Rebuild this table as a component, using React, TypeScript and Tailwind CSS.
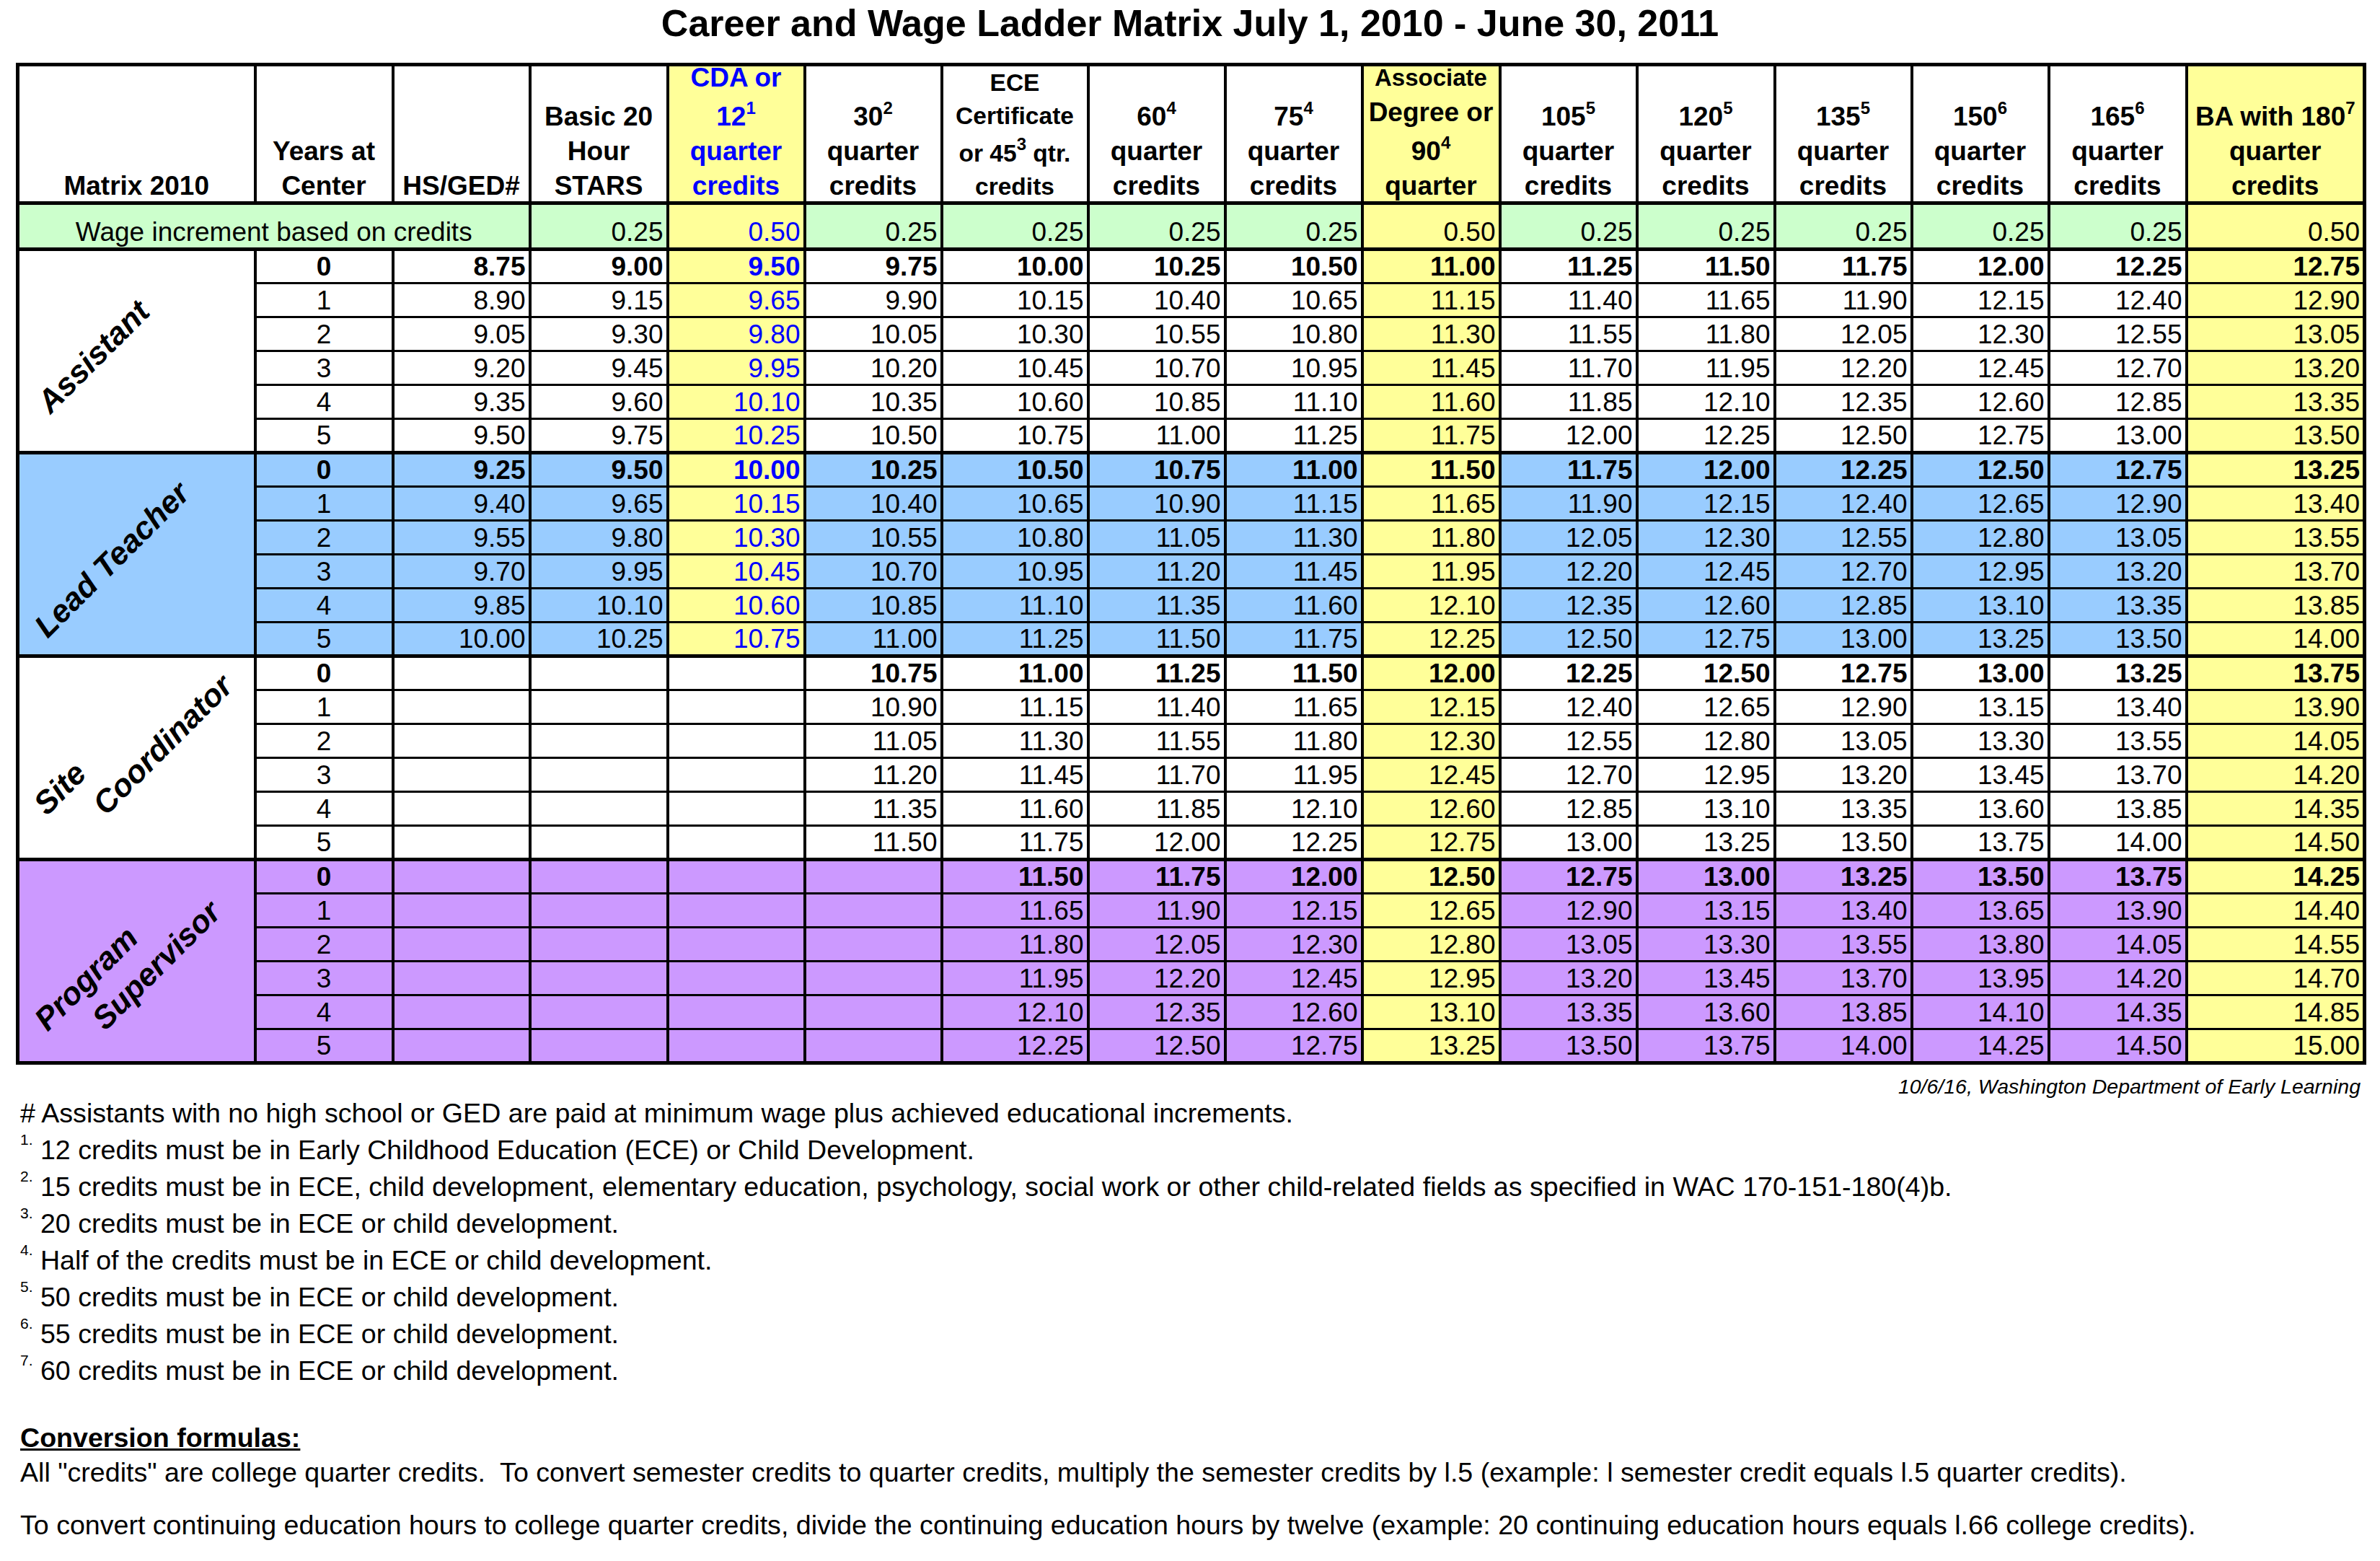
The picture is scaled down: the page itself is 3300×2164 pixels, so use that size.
import React from 'react';

const BASE = [875, 900, 950, 975, 1000, 1025, 1050, 1100, 1125, 1150, 1175, 1200, 1225, 1275];
const INCR = ['0.25', '0.50', '0.25', '0.25', '0.25', '0.25', '0.50', '0.25', '0.25', '0.25', '0.25', '0.25', '0.50'];
const COL_W = [
  'w-[329px]', 'w-[191px]', 'w-[190px]', 'w-[191px]', 'w-[190px]', 'w-[190px]', 'w-[203px]', 'w-[190px]',
  'w-[190px]', 'w-[191px]', 'w-[190px]', 'w-[191px]', 'w-[190px]', 'w-[190px]', 'w-[191px]', 'w-[247px]',
];

const fmt = (c: number) => `${Math.floor(c / 100)}.${String(c % 100).padStart(2, '0')}`;

const LBL = 'absolute origin-[0_37px] -rotate-45 whitespace-nowrap text-[44px] leading-none font-bold italic';

type Group = { key: string; offset: number; blank: number; bg: string; label: React.ReactNode };

const GROUPS: Group[] = [
  {
    key: 'assistant',
    offset: 0,
    blank: 0,
    bg: 'bg-white',
    label: <span className={`${LBL} left-[43px] top-[189.5px]`}>Assistant</span>,
  },
  {
    key: 'lead',
    offset: 50,
    blank: 0,
    bg: 'bg-[#99ccff]',
    label: <span className={`${LBL} left-[39px] top-[218.5px]`}>Lead Teacher</span>,
  },
  {
    key: 'site',
    offset: 100,
    blank: 3,
    bg: 'bg-white',
    label: (
      <>
        <span className={`${LBL} left-[38px] top-[183px]`}>Site</span>
        <span className={`${LBL} left-[120px] top-[183px]`}>Coordinator</span>
      </>
    ),
  },
  {
    key: 'program',
    offset: 150,
    blank: 4,
    bg: 'bg-[#cc99ff]',
    label: (
      <>
        <span className={`${LBL} left-[39px] top-[199.5px]`}>Program</span>
        <span className={`${LBL} left-[119px] top-[198.5px]`}>Supervisor</span>
      </>
    ),
  },
];

const Sup = ({ c }: { c: string }) => <sup className="text-[24px] -top-[16px]">{c}</sup>;
const FSup = ({ c }: { c: string }) => <sup className="text-[21px] -top-[20px]">{c}</sup>;

const HEAD =
  'border-t-[3px] border-b-[5px] border-l-[4px] border-r-[4px] border-black align-bottom text-center font-bold whitespace-nowrap';
const L = 'leading-[48px]';
const LS = 'leading-[48px] pt-[6px]';

function Head({ children }: { children: React.ReactNode }) {
  return <div className="relative top-[3px] -mt-[40px]">{children}</div>;
}

const GCELL =
  'border-t-[5px] border-b-[5px] border-l-[4px] border-r-[4px] border-black align-bottom pb-[3px] leading-none whitespace-nowrap';

function HeaderRow() {
  return (
    <tr className="h-[192px]">
      <td className={`${HEAD} bg-white`}>
        <Head>
          <div className={L}>Matrix 2010</div>
        </Head>
      </td>
      <td className={`${HEAD} bg-white`}>
        <Head>
          <div className={L}>Years at</div>
          <div className={L}>Center</div>
        </Head>
      </td>
      <td className={`${HEAD} bg-white`}>
        <Head>
          <div className={L}>HS/GED#</div>
        </Head>
      </td>
      <td className={`${HEAD} bg-white`}>
        <Head>
          <div className={L}>Basic 20</div>
          <div className={L}>Hour</div>
          <div className={L}>STARS</div>
        </Head>
      </td>
      <td className={`${HEAD} bg-[#ffff99] text-[#0000ff]`}>
        <Head>
          <div className={L}>CDA or</div>
          <div className={LS}>
            12<Sup c="1" />
          </div>
          <div className={L}>quarter</div>
          <div className={L}>credits</div>
        </Head>
      </td>
      <td className={`${HEAD} bg-white`}>
        <Head>
          <div className={L}>
            30<Sup c="2" />
          </div>
          <div className={L}>quarter</div>
          <div className={L}>credits</div>
        </Head>
      </td>
      <td className={`${HEAD} bg-white text-[33.5px]`}>
        <Head>
          <div className="leading-[46px]">ECE</div>
          <div className="leading-[46px]">Certificate</div>
          <div className="leading-[46px] pt-[6px]">
            or 45<Sup c="3" /> qtr.
          </div>
          <div className="leading-[46px]">credits</div>
        </Head>
      </td>
      <td className={`${HEAD} bg-white`}>
        <Head>
          <div className={L}>
            60<Sup c="4" />
          </div>
          <div className={L}>quarter</div>
          <div className={L}>credits</div>
        </Head>
      </td>
      <td className={`${HEAD} bg-white`}>
        <Head>
          <div className={L}>
            75<Sup c="4" />
          </div>
          <div className={L}>quarter</div>
          <div className={L}>credits</div>
        </Head>
      </td>
      <td className={`${HEAD} bg-[#ffff99]`}>
        <Head>
          <div className={`${L} text-[33px]`}>Associate</div>
          <div className={L}>Degree or</div>
          <div className={LS}>
            90<Sup c="4" />
          </div>
          <div className={L}>quarter</div>
        </Head>
      </td>
      <td className={`${HEAD} bg-white`}>
        <Head>
          <div className={L}>
            105<Sup c="5" />
          </div>
          <div className={L}>quarter</div>
          <div className={L}>credits</div>
        </Head>
      </td>
      <td className={`${HEAD} bg-white`}>
        <Head>
          <div className={L}>
            120<Sup c="5" />
          </div>
          <div className={L}>quarter</div>
          <div className={L}>credits</div>
        </Head>
      </td>
      <td className={`${HEAD} bg-white`}>
        <Head>
          <div className={L}>
            135<Sup c="5" />
          </div>
          <div className={L}>quarter</div>
          <div className={L}>credits</div>
        </Head>
      </td>
      <td className={`${HEAD} bg-white`}>
        <Head>
          <div className={L}>
            150<Sup c="6" />
          </div>
          <div className={L}>quarter</div>
          <div className={L}>credits</div>
        </Head>
      </td>
      <td className={`${HEAD} bg-white`}>
        <Head>
          <div className={L}>
            165<Sup c="6" />
          </div>
          <div className={L}>quarter</div>
          <div className={L}>credits</div>
        </Head>
      </td>
      <td className={`${HEAD} bg-[#ffff99]`}>
        <Head>
          <div className={L}>
            BA with 180<Sup c="7" />
          </div>
          <div className={L}>quarter</div>
          <div className={L}>credits</div>
        </Head>
      </td>
    </tr>
  );
}

function IncrementRow() {
  return (
    <tr className="h-[64px]">
      <td colSpan={3} className={`${GCELL} text-center bg-[#ccffcc]`}>
        Wage increment based on credits
      </td>
      {INCR.map((v, i) => {
        const yellow = i === 1 || i === 6 || i === 12;
        return (
          <td
            key={i}
            className={`${GCELL} text-right pr-[4px] ${yellow ? 'bg-[#ffff99]' : 'bg-[#ccffcc]'} ${
              i === 1 ? 'text-[#0000ff]' : ''
            }`}
          >
            {v}
          </td>
        );
      })}
    </tr>
  );
}

function GroupRows({ g }: { g: Group }) {
  return (
    <>
      {[0, 1, 2, 3, 4, 5].map((y) => {
        const bold = y === 0 ? 'font-bold' : '';
        const bb = y === 5 ? 'border-b-[5px]' : 'border-b-[3px]';
        const base = `border-t-[3px] border-l-[4px] border-r-[4px] border-black align-bottom pb-[3px] leading-none whitespace-nowrap ${bb} ${bold}`;
        return (
          <tr key={y} className="h-[47px]">
            {y === 0 && (
              <td
                rowSpan={6}
                className={`relative border-t-[3px] border-b-[5px] border-l-[4px] border-r-[4px] border-black ${g.bg}`}
              >
                {g.label}
              </td>
            )}
            <td className={`${base} text-center ${g.bg}`}>{y}</td>
            {BASE.map((b, i) => {
              const empty = i < g.blank;
              const yellow = i === 7 || i === 13 || (i === 2 && !empty);
              return (
                <td
                  key={i}
                  className={`${base} text-right pr-[4px] ${yellow ? 'bg-[#ffff99]' : g.bg} ${
                    i === 2 ? 'text-[#0000ff]' : ''
                  }`}
                >
                  {empty ? '' : fmt(b + g.offset + 15 * y)}
                </td>
              );
            })}
          </tr>
        );
      })}
    </>
  );
}

export default function App() {
  return (
    <div className="w-[3300px] h-[2164px] overflow-hidden bg-white text-black font-['Liberation_Sans',Arial,Helvetica,sans-serif]">
      <h1 className="pt-[6px] text-center text-[52px] leading-none font-bold">
        Career and Wage Ladder Matrix July 1, 2010 - June 30, 2011
      </h1>

      <table className="mt-[29px] ml-[22px] w-[3254px] table-fixed border-collapse border-[5px] border-black text-[37px]">
        <colgroup>
          {COL_W.map((w, i) => (
            <col key={i} className={w} />
          ))}
        </colgroup>
        <tbody>
          <HeaderRow />
          <IncrementRow />
          {GROUPS.map((g) => (
            <GroupRows key={g.key} g={g} />
          ))}
        </tbody>
      </table>

      <div className="mt-[16px] pr-[27px] text-right italic text-[28.5px] leading-none">
        10/6/16, Washington Department of Early Learning
      </div>

      <div className="-mt-[3px] pl-[28px] text-[37.6px] leading-[51px] whitespace-nowrap">
        <div># Assistants with no high school or GED are paid at minimum wage plus achieved educational increments.</div>
        <div>
          <FSup c="1." /> 12 credits must be in Early Childhood Education (ECE) or Child Development.
        </div>
        <div>
          <FSup c="2." /> 15 credits must be in ECE, child development, elementary education, psychology, social work or
          other child-related fields as specified in WAC 170-151-180(4)b.
        </div>
        <div>
          <FSup c="3." /> 20 credits must be in ECE or child development.
        </div>
        <div>
          <FSup c="4." /> Half of the credits must be in ECE or child development.
        </div>
        <div>
          <FSup c="5." /> 50 credits must be in ECE or child development.
        </div>
        <div>
          <FSup c="6." /> 55 credits must be in ECE or child development.
        </div>
        <div>
          <FSup c="7." /> 60 credits must be in ECE or child development.
        </div>

        <div className="mt-[42px] font-bold underline">Conversion formulas:</div>
        <div className="-mt-[3px]">
          All "credits" are college quarter credits.{'\u00a0'} To convert semester credits to quarter credits, multiply the
          semester credits by l.5 (example: l semester credit equals l.5 quarter credits).
        </div>
        <div className="mt-[22px]">
          To convert continuing education hours to college quarter credits, divide the continuing education hours by twelve
          (example: 20 continuing education hours equals l.66 college credits).
        </div>
      </div>
    </div>
  );
}
